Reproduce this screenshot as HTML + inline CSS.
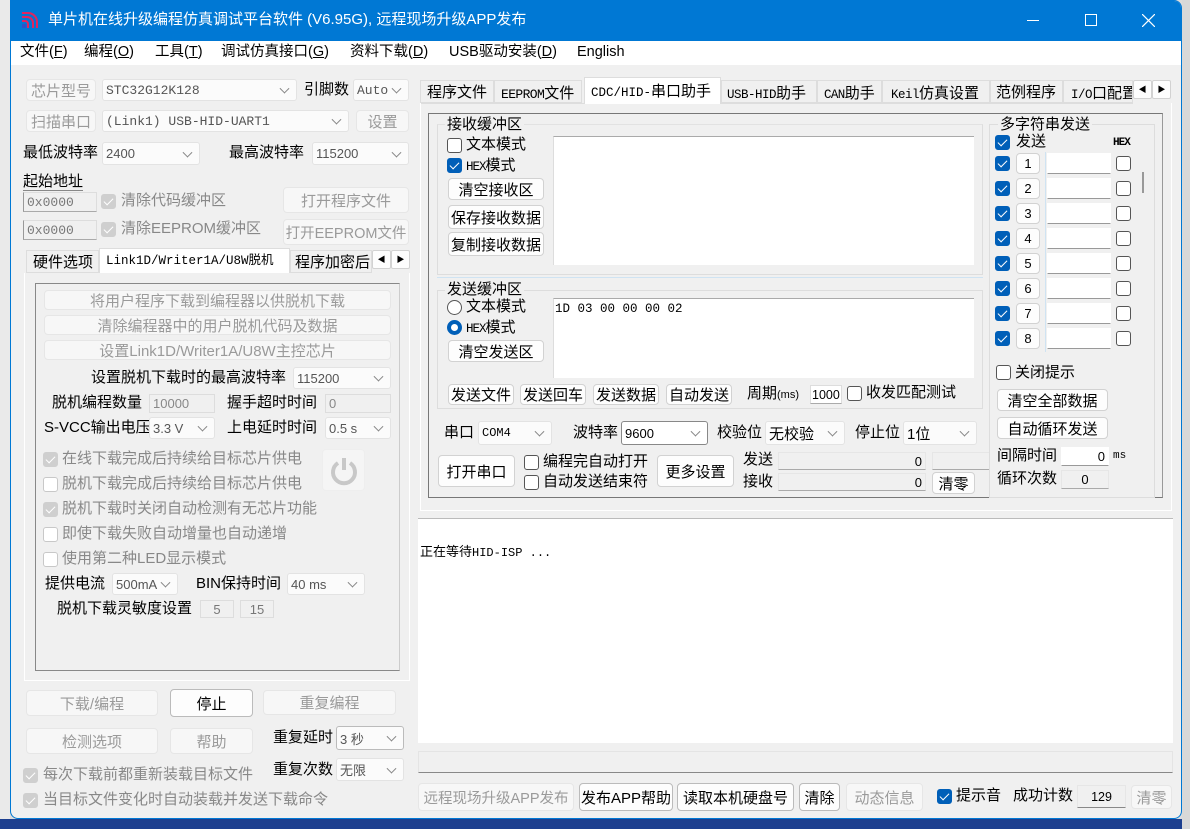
<!DOCTYPE html>
<html><head><meta charset="utf-8"><style>
*{box-sizing:border-box;margin:0;padding:0}
body{width:1190px;height:829px;position:relative;overflow:hidden;background:#dcdcdc;font-family:"Liberation Sans","Noto Sans CJK SC",sans-serif;font-size:15px;color:#000}
div,span{position:absolute}
.t{white-space:nowrap;line-height:1}
.b{background:#fdfdfd;border:1px solid #d2d2d2;border-radius:4px;text-align:center;white-space:nowrap;font-size:15px;display:flex;align-items:center;justify-content:center}
.d{color:#9a9a9a;background:#f7f7f7;border-color:#e6e6e6}
.s{background:#fbfbfb;border:1px solid #e3e3e3;border-radius:3px;font-size:13px;padding-left:3px;display:flex;align-items:center;white-space:nowrap;color:#555}
.s:after{content:"";position:absolute;right:8px;top:50%;width:6px;height:6px;border-right:1px solid #888;border-bottom:1px solid #888;transform:translateY(-70%) rotate(45deg)}
.m{font-family:"Liberation Mono",monospace}
.i{background:#f0f0f0;border:1px solid #ddd;border-bottom-color:#aaa;font-size:13px;display:flex;align-items:center;padding-left:3px;white-space:nowrap}
.w{background:#fff}
.c{width:15px;height:15px;border:1px solid #555;border-radius:3px;background:#fff}
.c.on{background:#005fb8;border-color:#005fb8}
.c.on:after,.c.g:after{content:"";position:absolute;left:4px;top:1px;width:4px;height:8px;border-right:1.5px solid #fff;border-bottom:1.5px solid #fff;transform:rotate(45deg)}
.c.g{background:#cfcfcf;border-color:#cfcfcf}
.c.e{border-color:#c8c8c8}
.gr{color:#888}
</style></head><body>
<div style="left:0;top:0;width:10px;height:829px;background:#eaeaea"></div>
<div style="left:0;top:819px;width:1190px;height:10px;background:#1d3f8f"></div>
<div style="left:1182px;top:0;width:8px;height:829px;background:#d8d8d8"></div>
<div style="left:10px;top:0;width:1172px;height:819px;background:#f0f0f0;border:1px solid #0078d4;border-radius:0 8px 8px 8px;overflow:hidden">
 <div style="left:0;top:0;width:1172px;height:40px;background:#0078d4"></div>
 <div style="left:0;top:40px;width:1172px;height:24px;background:#fff"></div>
</div>
<svg style="position:absolute;left:20px;top:10px" width="20" height="20" viewBox="0 0 20 20"><path d="M2 3h6a9 9 0 0 1 9 9v6M2 7h5a6 6 0 0 1 6 6v5M2 11h3a3 3 0 0 1 3 3v4" fill="none" stroke="#e0245e" stroke-width="2"/><rect x="2" y="14" width="4" height="4" fill="#3050c8"/></svg>
<div class="t" style="left:48px;top:12px;font-size:15px;color:#fff">单片机在线升级编程仿真调试平台软件 (V6.95G), 远程现场升级APP发布</div>
<div style="left:1027px;top:20px;width:12px;height:1px;background:#fff"></div>
<div style="left:1085px;top:14px;width:12px;height:12px;border:1px solid #fff"></div>
<svg style="position:absolute;left:1142px;top:14px" width="13" height="13"><path d="M0 0L13 13M13 0L0 13" stroke="#fff" stroke-width="1.2"/></svg>
<div class="t" style="left:20px;top:45px;font-size:14.5px">文件(<u>F</u>)</div>
<div class="t" style="left:84px;top:45px;font-size:14.5px">编程(<u>O</u>)</div>
<div class="t" style="left:155px;top:45px;font-size:14.5px">工具(<u>T</u>)</div>
<div class="t" style="left:221px;top:45px;font-size:14.5px">调试仿真接口(<u>G</u>)</div>
<div class="t" style="left:350px;top:45px;font-size:14.5px">资料下载(<u>D</u>)</div>
<div class="t" style="left:449px;top:45px;font-size:14.5px">USB驱动安装(<u>D</u>)</div>
<div class="t" style="left:577px;top:45px;font-size:14.5px">English</div>

<div class="b d" style="left:26px;top:79px;width:70px;height:22px">芯片型号</div>
<div class="s m" style="left:102px;top:79px;width:195px;height:22px">STC32G12K128</div>
<div class="t" style="left:304px;top:82px">引脚数</div>
<div class="s m" style="left:353px;top:79px;width:56px;height:22px">Auto</div>
<div class="b d" style="left:26px;top:110px;width:70px;height:22px">扫描串口</div>
<div class="s m" style="left:102px;top:110px;width:247px;height:22px">(Link1) USB-HID-UART1</div>
<div class="b d" style="left:356px;top:110px;width:53px;height:22px">设置</div>
<div class="t" style="left:23px;top:145px">最低波特率</div>
<div class="s" style="left:102px;top:142px;width:98px;height:23px">2400</div>
<div class="t" style="left:229px;top:145px">最高波特率</div>
<div class="s" style="left:312px;top:142px;width:97px;height:23px">115200</div>
<div class="t" style="left:23px;top:174px">起始地址</div>
<div style="left:23px;top:190px;width:60px;height:1px;background:#888"></div>
<div class="i m" style="left:23px;top:192px;width:74px;height:20px;color:#777;border-left-color:#999">0x0000</div>
<div class="c g" style="left:101px;top:194px"></div><div class="t gr" style="left:121px;top:193px">清除代码缓冲区</div>
<div class="b d" style="left:283px;top:187px;width:126px;height:26px;font-size:15px">打开程序文件</div>
<div class="i m" style="left:23px;top:220px;width:74px;height:20px;color:#777;border-left-color:#999">0x0000</div>
<div class="c g" style="left:101px;top:222px"></div><div class="t gr" style="left:121px;top:221px">清除EEPROM缓冲区</div>
<div class="b d" style="left:283px;top:219px;width:126px;height:26px;font-size:14.5px">打开EEPROM文件</div>
<div style="left:26px;top:250px;width:73px;height:23px;background:#f0f0f0;border:1px solid #ddd"></div><div class="t" style="left:33px;top:255px">硬件选项</div>
<div style="left:99px;top:248px;width:191px;height:26px;background:#fff;border:1px solid #ddd;border-bottom:none"></div><div class="t m" style="left:106px;top:255px;font-size:12.5px">Link1D/Writer1A/U8W脱机</div>
<div style="left:290px;top:250px;width:82px;height:23px;border:1px solid #ddd;overflow:hidden"><span class="t" style="left:4px;top:4px">程序加密后</span></div>
<div class="b" style="left:372px;top:250px;width:19px;height:19px;font-size:8px;border-radius:2px">◀</div>
<div class="b" style="left:391px;top:250px;width:19px;height:19px;font-size:8px;border-radius:2px">▶</div>
<div style="left:24px;top:273px;width:386px;height:408px;border:1px solid #fff;border-top:none;background:#f0f0f0"></div>
<div style="left:35px;top:283px;width:365px;height:388px;border:1px solid #888;border-right-color:#ccc;border-bottom-color:#888"></div>
<div class="b d" style="left:44px;top:290px;width:347px;height:20px">将用户程序下载到编程器以供脱机下载</div>
<div class="b d" style="left:44px;top:315px;width:347px;height:20px">清除编程器中的用户脱机代码及数据</div>
<div class="b d" style="left:44px;top:340px;width:347px;height:20px">设置Link1D/Writer1A/U8W主控芯片</div>
<div class="t" style="left:91px;top:370px">设置脱机下载时的最高波特率</div>
<div class="s" style="left:293px;top:367px;width:98px;height:22px">115200</div>
<div class="t" style="left:52px;top:395px">脱机编程数量</div>
<div class="i" style="left:149px;top:394px;width:66px;height:19px;color:#888;border-bottom-color:#ddd">10000</div>
<div class="t" style="left:227px;top:395px">握手超时时间</div>
<div class="i" style="left:325px;top:394px;width:66px;height:19px;color:#888;border-bottom-color:#ddd">0</div>
<div class="t" style="left:44px;top:420px">S-VCC输出电压</div>
<div class="s" style="left:149px;top:417px;width:66px;height:22px">3.3 V</div>
<div class="t" style="left:227px;top:420px">上电延时时间</div>
<div class="s" style="left:325px;top:417px;width:66px;height:22px">0.5 s</div>
<div class="c g" style="left:43px;top:452px"></div><div class="t gr" style="left:62px;top:451px">在线下载完成后持续给目标芯片供电</div>
<div class="c e" style="left:43px;top:477px"></div><div class="t gr" style="left:62px;top:476px">脱机下载完成后持续给目标芯片供电</div>
<div class="c g" style="left:43px;top:502px"></div><div class="t gr" style="left:62px;top:501px">脱机下载时关闭自动检测有无芯片功能</div>
<div class="c e" style="left:43px;top:527px"></div><div class="t gr" style="left:62px;top:526px">即使下载失败自动增量也自动递增</div>
<div class="c e" style="left:43px;top:552px"></div><div class="t gr" style="left:62px;top:551px">使用第二种LED显示模式</div>
<div class="b" style="left:322px;top:449px;width:43px;height:42px;background:#f5f5f5;border-color:#eee"><svg width="32" height="32" viewBox="0 0 32 32"><path d="M10 9a11 11 0 1 0 12 0" fill="none" stroke="#c8c8c8" stroke-width="4"/><path d="M16 4v12" stroke="#c8c8c8" stroke-width="4"/></svg></div>
<div class="t" style="left:45px;top:576px">提供电流</div>
<div class="s" style="left:112px;top:573px;width:66px;height:22px">500mA</div>
<div class="t" style="left:196px;top:576px">BIN保持时间</div>
<div class="s" style="left:287px;top:573px;width:78px;height:22px">40 ms</div>
<div class="t" style="left:57px;top:601px">脱机下载灵敏度设置</div>
<div class="i" style="left:200px;top:600px;width:34px;height:18px;color:#777;justify-content:center;padding:0;border-bottom-color:#ddd">5</div>
<div class="i" style="left:240px;top:600px;width:34px;height:18px;color:#777;justify-content:center;padding:0;border-bottom-color:#ddd">15</div>
<div class="b d" style="left:26px;top:690px;width:132px;height:26px">下载/编程</div>
<div class="b" style="left:170px;top:689px;width:83px;height:28px;border-color:#bbb">停止</div>
<div class="b d" style="left:263px;top:690px;width:133px;height:25px">重复编程</div>
<div class="b d" style="left:26px;top:728px;width:132px;height:26px">检测选项</div>
<div class="b d" style="left:170px;top:728px;width:83px;height:26px">帮助</div>
<div class="t" style="left:273px;top:730px">重复延时</div>
<div class="s" style="left:336px;top:726px;width:68px;height:24px;border-color:#bbb">3 秒</div>
<div class="t" style="left:273px;top:762px">重复次数</div>
<div class="s" style="left:336px;top:758px;width:68px;height:23px">无限</div>
<div class="c g" style="left:23px;top:768px"></div><div class="t gr" style="left:43px;top:767px">每次下载前都重新装载目标文件</div>
<div class="c g" style="left:23px;top:793px"></div><div class="t gr" style="left:43px;top:792px">当目标文件变化时自动装载并发送下载命令</div>

<div style="left:420px;top:80px;width:713px;height:24px;border-bottom:1px solid #ddd"></div>
<div style="left:420px;top:80px;width:74px;height:23px;border:1px solid #ddd"></div><div class="t" style="left:427px;top:85px">程序文件</div>
<div style="left:494px;top:80px;width:88px;height:23px;border:1px solid #ddd"></div><div class="t m" style="left:501px;top:86px;font-size:13px;letter-spacing:-0.6px">EEPROM<span style="position:static;font-family:'Liberation Sans','Noto Sans CJK SC',sans-serif;font-size:15px;letter-spacing:0">文件</span></div>
<div style="left:584px;top:77px;width:137px;height:27px;background:#fff;border:1px solid #ddd;border-bottom:none"></div><div class="t m" style="left:591px;top:84px;font-size:12.5px">CDC/HID-<span style="position:static;font-family:'Liberation Sans','Noto Sans CJK SC',sans-serif;font-size:15px">串口助手</span></div>
<div style="left:721px;top:80px;width:96px;height:23px;border:1px solid #ddd"></div><div class="t m" style="left:727px;top:86px;font-size:12.5px;letter-spacing:-0.5px">USB-HID<span style="position:static;font-family:'Liberation Sans','Noto Sans CJK SC',sans-serif;font-size:15px;letter-spacing:0">助手</span></div>
<div style="left:817px;top:80px;width:65px;height:23px;border:1px solid #ddd"></div><div class="t m" style="left:824px;top:86px;font-size:12.5px;letter-spacing:-0.6px">CAN<span style="position:static;font-family:'Liberation Sans','Noto Sans CJK SC',sans-serif;font-size:15px;letter-spacing:0">助手</span></div>
<div style="left:882px;top:80px;width:108px;height:23px;border:1px solid #ddd"></div><div class="t m" style="left:891px;top:86px;font-size:12.5px;letter-spacing:-0.5px">Keil<span style="position:static;font-family:'Liberation Sans','Noto Sans CJK SC',sans-serif;font-size:15px;letter-spacing:0">仿真设置</span></div>
<div style="left:990px;top:80px;width:73px;height:23px;border:1px solid #ddd"></div><div class="t" style="left:996px;top:85px">范例程序</div>
<div style="left:1063px;top:80px;width:70px;height:23px;border:1px solid #ddd;overflow:hidden"><span class="t m" style="left:7px;top:5px;font-size:12.5px;letter-spacing:-0.5px">I/O<span style="position:static;font-family:'Liberation Sans','Noto Sans CJK SC',sans-serif;font-size:15px;letter-spacing:0">口配置</span></span></div>
<div class="b" style="left:1133px;top:80px;width:19px;height:19px;font-size:8px;border-radius:2px">◀</div>
<div class="b" style="left:1152px;top:80px;width:19px;height:19px;font-size:8px;border-radius:2px">▶</div>
<div style="left:420px;top:103px;width:752px;height:408px;border:1px solid #fff;border-top:none"></div>
<div style="left:428px;top:113px;width:735px;height:385px;border:1px solid #777;border-right-color:#999;border-bottom-color:#777"></div>
<div style="left:437px;top:124px;width:546px;height:151px;border:1px solid #ddd;border-top:1px solid #e2e2e2"></div>
<div class="t" style="left:445px;top:117px;background:#f0f0f0;padding:0 2px">接收缓冲区</div>
<div class="c" style="left:447px;top:138px"></div><div class="t" style="left:466px;top:137px">文本模式</div>
<div class="c on" style="left:447px;top:158px"></div><div class="t m" style="left:466px;top:158px;font-size:12.5px;letter-spacing:-1px">HEX<span style="position:static;font-family:'Liberation Sans','Noto Sans CJK SC',sans-serif;font-size:15px;letter-spacing:0">模式</span></div>
<div class="b" style="left:448px;top:178px;width:96px;height:22px">清空接收区</div>
<div class="b" style="left:448px;top:205px;width:96px;height:24px">保存接收数据</div>
<div class="b" style="left:448px;top:232px;width:96px;height:24px">复制接收数据</div>
<div style="left:553px;top:136px;width:421px;height:129px;background:#fff;border-top:1px solid #aaa;border-left:1px solid #ddd"></div>
<div style="left:437px;top:277px;width:546px;height:1px;background:#cfe3f2"></div>
<div style="left:437px;top:290px;width:546px;height:119px;border:1px solid #ddd"></div>
<div class="t" style="left:445px;top:282px;background:#f0f0f0;padding:0 2px">发送缓冲区</div>
<div class="c" style="left:447px;top:300px;border-radius:50%"></div><div class="t" style="left:466px;top:299px">文本模式</div>
<div class="c" style="left:447px;top:320px;border-radius:50%;border:4px solid #005fb8"></div><div class="t m" style="left:466px;top:320px;font-size:12.5px;letter-spacing:-1px">HEX<span style="position:static;font-family:'Liberation Sans','Noto Sans CJK SC',sans-serif;font-size:15px;letter-spacing:0">模式</span></div>
<div class="b" style="left:448px;top:340px;width:96px;height:22px">清空发送区</div>
<div style="left:553px;top:298px;width:421px;height:80px;background:#fff;border-top:1px solid #aaa;border-left:1px solid #ddd"></div>
<div class="t m" style="left:555px;top:303px;font-size:12.5px">1D 03 00 00 00 02</div>
<div class="b" style="left:448px;top:384px;width:66px;height:21px">发送文件</div>
<div class="b" style="left:520px;top:384px;width:66px;height:21px">发送回车</div>
<div class="b" style="left:593px;top:384px;width:66px;height:21px">发送数据</div>
<div class="b" style="left:666px;top:384px;width:66px;height:21px">自动发送</div>
<div class="t" style="left:747px;top:386px">周期<span style="position:static;font-size:11px">(ms)</span></div>
<div class="i w" style="left:810px;top:385px;width:32px;height:19px;padding-left:1px;font-size:12.5px;overflow:hidden">1000</div>
<div class="c" style="left:847px;top:386px"></div><div class="t" style="left:866px;top:385px">收发匹配测试</div>
<div class="t" style="left:444px;top:425px">串口</div>
<div class="s m" style="left:478px;top:421px;width:74px;height:24px;color:#000;font-size:12px">COM4</div>
<div class="t" style="left:573px;top:425px">波特率</div>
<div class="s" style="left:621px;top:421px;width:87px;height:24px;color:#000;border-color:#888;background:#fff">9600</div>
<div class="t" style="left:717px;top:425px">校验位</div>
<div class="s" style="left:765px;top:421px;width:80px;height:24px;color:#000;font-size:15px">无校验</div>
<div class="t" style="left:855px;top:425px">停止位</div>
<div class="s" style="left:903px;top:421px;width:74px;height:24px;color:#000;font-size:15px">1位</div>
<div class="b" style="left:438px;top:455px;width:77px;height:32px">打开串口</div>
<div class="c" style="left:524px;top:455px"></div><div class="t" style="left:543px;top:454px">编程完自动打开</div>
<div class="c" style="left:524px;top:475px"></div><div class="t" style="left:543px;top:474px">自动发送结束符</div>
<div class="b" style="left:657px;top:455px;width:77px;height:32px">更多设置</div>
<div class="t" style="left:743px;top:452px">发送</div>
<div class="t" style="left:743px;top:474px">接收</div>
<div class="i" style="left:778px;top:452px;width:148px;height:18px;justify-content:flex-end;padding-right:3px;border-color:#e6e6e6;border-bottom-color:#aaa">0</div>
<div class="i" style="left:778px;top:473px;width:148px;height:18px;justify-content:flex-end;padding-right:3px;border-color:#e6e6e6;border-bottom-color:#aaa">0</div>
<div class="i" style="left:932px;top:452px;width:58px;height:18px;border-color:#e6e6e6;border-bottom-color:#aaa"></div>
<div class="b" style="left:932px;top:472px;width:43px;height:22px">清零</div>
<div style="left:989px;top:124px;width:166px;height:374px;border:1px solid #ddd"></div>
<div class="t" style="left:998px;top:117px;background:#f0f0f0;padding:0 2px">多字符串发送</div>
<div class="c on" style="left:995px;top:135px"></div><div class="t" style="left:1016px;top:134px">发送</div>
<div class="t m" style="left:1113px;top:138px;font-size:11px;letter-spacing:-1px;font-weight:bold">HEX</div>
<div style="left:1045px;top:152px;width:1px;height:200px;background:#cfe3f2"></div>
<div style="left:1142px;top:172px;width:2px;height:21px;background:#999"></div>
<div class="c on" style="left:995px;top:156px"></div><div class="b" style="left:1016px;top:153px;width:24px;height:21px;font-size:13px">1</div><div class="i w" style="left:1047px;top:153px;width:64px;height:21px;border-color:#fff;border-bottom-color:#999"></div><div class="c" style="left:1116px;top:156px"></div>
<div class="c on" style="left:995px;top:181px"></div><div class="b" style="left:1016px;top:178px;width:24px;height:21px;font-size:13px">2</div><div class="i w" style="left:1047px;top:178px;width:64px;height:21px;border-color:#fff;border-bottom-color:#999"></div><div class="c" style="left:1116px;top:181px"></div>
<div class="c on" style="left:995px;top:206px"></div><div class="b" style="left:1016px;top:203px;width:24px;height:21px;font-size:13px">3</div><div class="i w" style="left:1047px;top:203px;width:64px;height:21px;border-color:#fff;border-bottom-color:#999"></div><div class="c" style="left:1116px;top:206px"></div>
<div class="c on" style="left:995px;top:231px"></div><div class="b" style="left:1016px;top:228px;width:24px;height:21px;font-size:13px">4</div><div class="i w" style="left:1047px;top:228px;width:64px;height:21px;border-color:#fff;border-bottom-color:#999"></div><div class="c" style="left:1116px;top:231px"></div>
<div class="c on" style="left:995px;top:256px"></div><div class="b" style="left:1016px;top:253px;width:24px;height:21px;font-size:13px">5</div><div class="i w" style="left:1047px;top:253px;width:64px;height:21px;border-color:#fff;border-bottom-color:#999"></div><div class="c" style="left:1116px;top:256px"></div>
<div class="c on" style="left:995px;top:281px"></div><div class="b" style="left:1016px;top:278px;width:24px;height:21px;font-size:13px">6</div><div class="i w" style="left:1047px;top:278px;width:64px;height:21px;border-color:#fff;border-bottom-color:#999"></div><div class="c" style="left:1116px;top:281px"></div>
<div class="c on" style="left:995px;top:306px"></div><div class="b" style="left:1016px;top:303px;width:24px;height:21px;font-size:13px">7</div><div class="i w" style="left:1047px;top:303px;width:64px;height:21px;border-color:#fff;border-bottom-color:#999"></div><div class="c" style="left:1116px;top:306px"></div>
<div class="c on" style="left:995px;top:331px"></div><div class="b" style="left:1016px;top:328px;width:24px;height:21px;font-size:13px">8</div><div class="i w" style="left:1047px;top:328px;width:64px;height:21px;border-color:#fff;border-bottom-color:#999"></div><div class="c" style="left:1116px;top:331px"></div>
<div class="c" style="left:996px;top:365px"></div><div class="t" style="left:1015px;top:365px">关闭提示</div>
<div class="b" style="left:997px;top:389px;width:111px;height:22px">清空全部数据</div>
<div class="b" style="left:997px;top:417px;width:111px;height:22px">自动循环发送</div>
<div class="t" style="left:997px;top:448px">间隔时间</div>
<div class="i w" style="left:1061px;top:447px;width:48px;height:19px;justify-content:flex-end;padding-right:3px;border-color:#fff;border-bottom-color:#999">0</div>
<div class="t m" style="left:1113px;top:451px;font-size:11px">ms</div>
<div class="t" style="left:997px;top:471px">循环次数</div>
<div class="i" style="left:1061px;top:470px;width:48px;height:19px;justify-content:center;padding:0;border-color:#e6e6e6;border-bottom-color:#aaa">0</div>
<div style="left:418px;top:518px;width:755px;height:225px;background:#fff;border-top:1px solid #bbb"></div>
<div class="t" style="left:420px;top:545px;font-size:13px">正在等待<span class="m" style="position:static;font-size:12px">HID-ISP ...</span></div>
<div style="left:418px;top:751px;width:755px;height:22px;background:#f0f0f0;border:1px solid #e4e4e4;border-bottom:1px solid #888"></div>
<div class="b d" style="left:418px;top:783px;width:156px;height:28px;font-size:14.5px">远程现场升级APP发布</div>
<div class="b" style="left:579px;top:783px;width:94px;height:28px;border-color:#bbb">发布APP帮助</div>
<div class="b" style="left:677px;top:783px;width:117px;height:28px;border-color:#bbb">读取本机硬盘号</div>
<div class="b" style="left:799px;top:783px;width:41px;height:28px;border-color:#bbb">清除</div>
<div class="b d" style="left:846px;top:783px;width:77px;height:28px">动态信息</div>
<div class="c on" style="left:937px;top:789px"></div><div class="t" style="left:956px;top:788px">提示音</div>
<div class="t" style="left:1013px;top:788px">成功计数</div>
<div class="i" style="left:1077px;top:785px;width:49px;height:23px;justify-content:center;padding:0;border-color:#e6e6e6;border-bottom-color:#888;font-size:12.5px">129</div>
<div class="b d" style="left:1131px;top:785px;width:41px;height:24px">清零</div>
</body></html>
